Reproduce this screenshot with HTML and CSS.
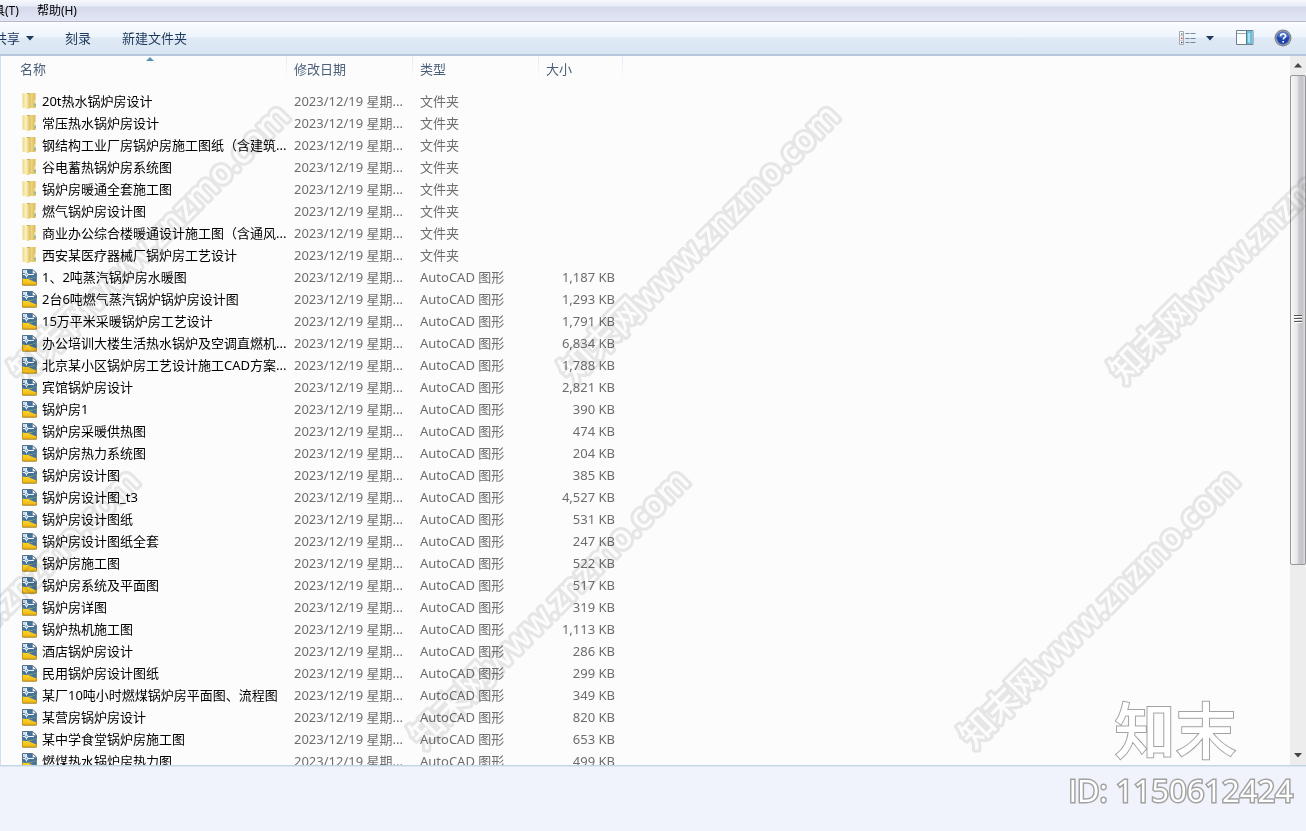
FILE: index.html
```html
<!DOCTYPE html>
<html lang="zh-CN">
<head>
<meta charset="utf-8">
<title>锅炉房设计</title>
<link rel="stylesheet" href="styles.css">
</head>
<body>
<svg class="defs" aria-hidden="true">
  <defs>
    <linearGradient id="gold" x1="0" x2="1" y1="0" y2="0"><stop offset="0" stop-color="#ecd481"/><stop offset=".45" stop-color="#fcf3c0"/><stop offset="1" stop-color="#dfbf5c"/></linearGradient>
    <linearGradient id="goldback" x1="0" x2="1" y1="0" y2="0"><stop offset="0" stop-color="#a98a3c"/><stop offset=".5" stop-color="#ecd683"/><stop offset="1" stop-color="#d9b954"/></linearGradient>
    <linearGradient id="yellow" x1="0" x2="0" y1="0" y2="1"><stop offset="0" stop-color="#ffe23c"/><stop offset="1" stop-color="#eeb511"/></linearGradient>
    <symbol id="folder" viewBox="0 0 16 18">
      <path d="M5 1h8.500v15H5z" fill="url(#goldback)"/>
      <path d="M.5 1.300h3.500L8 2.200v13L6.500 17.200.5 15.500z" fill="url(#gold)"/>
      <path d="M12.500 8h1.300v3.500h-1.300z" fill="#f8f4da"/><path d="M12.500 11.500h1.300v3h-1.300z" fill="#74b4ad"/>
    </symbol>
    <symbol id="dwg" viewBox="0 0 16 18">
      <path d="M.5 1.500h10L14.500 5v12H.5z" fill="#44739c" stroke="#54738d"/>
      <path d="M.5 10.800 6 11.200 14.500 15.800V17H.5z" fill="#f5c91d"/>
      <path d="M.5 10.800C6 11.300 11 10.300 14.500 8.500V17H.5z" fill="url(#yellow)"/>
      <path d="M6.500 11.300C10 10.800 12.500 9.600 14.500 8.500V14.500z" fill="#44739c"/>
      <path d="M.5 11v6h14v-3" fill="none" stroke="#ca920d"/>
      <path d="M1 2h3v3H1z" fill="#cfdeea"/>
      <path d="M4.500 2v7.500M1 6.500h11" stroke="#f2f7fb"/>
      <circle cx="4.500" cy="6.500" r="1.500" fill="#7ba3c2" stroke="#fff"/>
      <path d="M10.500 1.500V5.500H14.500z" fill="#f3f7fa" stroke="#6f879c" stroke-width=".8"/>
    </symbol>
  </defs>
</svg>

<div class="window">
  <nav class="menubar" aria-label="菜单">
    <button class="menu" type="button">具(T)</button>
    <button class="menu" type="button">帮助(H)</button>
  </nav>

  <header class="toolbar">
    <button class="tool tool-share" type="button">共享<svg class="caret" viewBox="0 0 8 5"><path d="M0 0h8L4 4.500z"/></svg></button>
    <button class="tool" type="button">刻录</button>
    <button class="tool" type="button">新建文件夹</button>
    <div class="tools-right">
      <button class="icon-btn view-btn" type="button" aria-label="更改您的视图">
        <svg width="17" height="15" viewBox="0 0 17 15"><path d="M.5.5h4v13h-4z" fill="#fff" stroke="#a3a8ae"/><path d="M.5 4.800h4M.5 9.200h4" stroke="#b7bbc0"/><path d="M2 2.200h1.500v1.500H2z" fill="#5c8a6b"/><path d="M2 6.500h1.500V8H2z" fill="#d04a38"/><path d="M2 10.800h1.500v1.500H2z" fill="#2e4f7d"/><path d="M6.500 2.500h4M6.500 7.500h4M6.500 11.500h4M11.500 2.500h5M11.500 7.500h5M11.500 11.500h5" stroke="#77869b" stroke-width="1.200"/></svg>
        <svg class="caret" viewBox="0 0 8 5"><path d="M0 0h8L4 4.500z"/></svg>
      </button>
      <button class="icon-btn" type="button" aria-label="显示预览窗格">
        <svg width="18" height="16" viewBox="0 0 18 16"><path d="M.5.500h16.500v14H.5z" fill="#fdfefe" stroke="#6e7f93"/><path d="M1 3.500h10" stroke="#9ba8b6"/><path d="M11 1h5.500v13H11z" fill="#6cc0da"/><path d="M12 3h2v9.500h-2z" fill="#a9e1ee"/><path d="M10.500 1v13.500" stroke="#567b91"/></svg>
      </button>
      <button class="icon-btn" type="button" aria-label="获取帮助">
        <svg width="18" height="18" viewBox="0 0 18 18"><circle cx="9" cy="9" r="7.800" fill="#d5d7dc" stroke="#85888f" stroke-width="1.400"/><circle cx="9" cy="9" r="6.300" fill="#1e43ad" stroke="#4b66a5"/><path d="M3.500 7.500a5.600 5.600 0 0 1 11 0q-5 3-11 0z" fill="#5f86dc" opacity=".65"/><path d="M6.600 7.200c0-3.300 5-3.100 5-.300 0 1.800-2.300 1.700-2.300 3.600M9.200 12v1.500" fill="none" stroke="#fff" stroke-width="1.700"/></svg>
      </button>
    </div>
  </header>

  <main class="content">
    <div class="list">
      <svg class="sort" viewBox="0 0 8 4"><path d="M4 0 8 4H0z"/></svg>
      <table class="files">
        <colgroup><col class="c-name"><col class="c-date"><col class="c-type"><col class="c-size"><col></colgroup>
        <thead><tr><th>名称</th><th>修改日期</th><th>类型</th><th>大小</th><th></th></tr></thead>
        <tbody>
          <tr><td><svg class="ico"><use href="#folder"/></svg>20t热水锅炉房设计</td><td>2023/12/19 星期...</td><td>文件夹</td><td></td></tr>
          <tr><td><svg class="ico"><use href="#folder"/></svg>常压热水锅炉房设计</td><td>2023/12/19 星期...</td><td>文件夹</td><td></td></tr>
          <tr><td><svg class="ico"><use href="#folder"/></svg>钢结构工业厂房锅炉房施工图纸（含建筑...</td><td>2023/12/19 星期...</td><td>文件夹</td><td></td></tr>
          <tr><td><svg class="ico"><use href="#folder"/></svg>谷电蓄热锅炉房系统图</td><td>2023/12/19 星期...</td><td>文件夹</td><td></td></tr>
          <tr><td><svg class="ico"><use href="#folder"/></svg>锅炉房暖通全套施工图</td><td>2023/12/19 星期...</td><td>文件夹</td><td></td></tr>
          <tr><td><svg class="ico"><use href="#folder"/></svg>燃气锅炉房设计图</td><td>2023/12/19 星期...</td><td>文件夹</td><td></td></tr>
          <tr><td><svg class="ico"><use href="#folder"/></svg>商业办公综合楼暖通设计施工图（含通风...</td><td>2023/12/19 星期...</td><td>文件夹</td><td></td></tr>
          <tr><td><svg class="ico"><use href="#folder"/></svg>西安某医疗器械厂锅炉房工艺设计</td><td>2023/12/19 星期...</td><td>文件夹</td><td></td></tr>
          <tr><td><svg class="ico"><use href="#dwg"/></svg>1、2吨蒸汽锅炉房水暖图</td><td>2023/12/19 星期...</td><td>AutoCAD 图形</td><td>1,187 KB</td></tr>
          <tr><td><svg class="ico"><use href="#dwg"/></svg>2台6吨燃气蒸汽锅炉锅炉房设计图</td><td>2023/12/19 星期...</td><td>AutoCAD 图形</td><td>1,293 KB</td></tr>
          <tr><td><svg class="ico"><use href="#dwg"/></svg>15万平米采暖锅炉房工艺设计</td><td>2023/12/19 星期...</td><td>AutoCAD 图形</td><td>1,791 KB</td></tr>
          <tr><td><svg class="ico"><use href="#dwg"/></svg>办公培训大楼生活热水锅炉及空调直燃机...</td><td>2023/12/19 星期...</td><td>AutoCAD 图形</td><td>6,834 KB</td></tr>
          <tr><td><svg class="ico"><use href="#dwg"/></svg>北京某小区锅炉房工艺设计施工CAD方案...</td><td>2023/12/19 星期...</td><td>AutoCAD 图形</td><td>1,788 KB</td></tr>
          <tr><td><svg class="ico"><use href="#dwg"/></svg>宾馆锅炉房设计</td><td>2023/12/19 星期...</td><td>AutoCAD 图形</td><td>2,821 KB</td></tr>
          <tr><td><svg class="ico"><use href="#dwg"/></svg>锅炉房1</td><td>2023/12/19 星期...</td><td>AutoCAD 图形</td><td>390 KB</td></tr>
          <tr><td><svg class="ico"><use href="#dwg"/></svg>锅炉房采暖供热图</td><td>2023/12/19 星期...</td><td>AutoCAD 图形</td><td>474 KB</td></tr>
          <tr><td><svg class="ico"><use href="#dwg"/></svg>锅炉房热力系统图</td><td>2023/12/19 星期...</td><td>AutoCAD 图形</td><td>204 KB</td></tr>
          <tr><td><svg class="ico"><use href="#dwg"/></svg>锅炉房设计图</td><td>2023/12/19 星期...</td><td>AutoCAD 图形</td><td>385 KB</td></tr>
          <tr><td><svg class="ico"><use href="#dwg"/></svg>锅炉房设计图_t3</td><td>2023/12/19 星期...</td><td>AutoCAD 图形</td><td>4,527 KB</td></tr>
          <tr><td><svg class="ico"><use href="#dwg"/></svg>锅炉房设计图纸</td><td>2023/12/19 星期...</td><td>AutoCAD 图形</td><td>531 KB</td></tr>
          <tr><td><svg class="ico"><use href="#dwg"/></svg>锅炉房设计图纸全套</td><td>2023/12/19 星期...</td><td>AutoCAD 图形</td><td>247 KB</td></tr>
          <tr><td><svg class="ico"><use href="#dwg"/></svg>锅炉房施工图</td><td>2023/12/19 星期...</td><td>AutoCAD 图形</td><td>522 KB</td></tr>
          <tr><td><svg class="ico"><use href="#dwg"/></svg>锅炉房系统及平面图</td><td>2023/12/19 星期...</td><td>AutoCAD 图形</td><td>517 KB</td></tr>
          <tr><td><svg class="ico"><use href="#dwg"/></svg>锅炉房详图</td><td>2023/12/19 星期...</td><td>AutoCAD 图形</td><td>319 KB</td></tr>
          <tr><td><svg class="ico"><use href="#dwg"/></svg>锅炉热机施工图</td><td>2023/12/19 星期...</td><td>AutoCAD 图形</td><td>1,113 KB</td></tr>
          <tr><td><svg class="ico"><use href="#dwg"/></svg>酒店锅炉房设计</td><td>2023/12/19 星期...</td><td>AutoCAD 图形</td><td>286 KB</td></tr>
          <tr><td><svg class="ico"><use href="#dwg"/></svg>民用锅炉房设计图纸</td><td>2023/12/19 星期...</td><td>AutoCAD 图形</td><td>299 KB</td></tr>
          <tr><td><svg class="ico"><use href="#dwg"/></svg>某厂10吨小时燃煤锅炉房平面图、流程图</td><td>2023/12/19 星期...</td><td>AutoCAD 图形</td><td>349 KB</td></tr>
          <tr><td><svg class="ico"><use href="#dwg"/></svg>某营房锅炉房设计</td><td>2023/12/19 星期...</td><td>AutoCAD 图形</td><td>820 KB</td></tr>
          <tr><td><svg class="ico"><use href="#dwg"/></svg>某中学食堂锅炉房施工图</td><td>2023/12/19 星期...</td><td>AutoCAD 图形</td><td>653 KB</td></tr>
          <tr><td><svg class="ico"><use href="#dwg"/></svg>燃煤热水锅炉房热力图</td><td>2023/12/19 星期...</td><td>AutoCAD 图形</td><td>499 KB</td></tr>
        </tbody>
      </table>
    </div>
    <div class="scrollbar">
      <button class="arrow" type="button" aria-label="向上滚动"><svg width="8" height="5" viewBox="0 0 8 5"><path d="M4 0 8 4.500H0z" fill="#444"/></svg></button>
      <div class="track"><div class="thumb"><svg width="8" height="9" viewBox="0 0 8 9"><path d="M0 .5h8M0 3.500h8M0 6.500h8" stroke="#555"/><path d="M0 1.500h8M0 4.500h8M0 7.500h8" stroke="#fff"/></svg></div></div>
      <button class="arrow" type="button" aria-label="向下滚动"><svg width="8" height="5" viewBox="0 0 8 5"><path d="M0 0h8L4 4.500z" fill="#444"/></svg></button>
    </div>
  </main>

  <footer class="details"></footer>

  <svg class="watermark" aria-hidden="true">
    <text transform="translate(24 385) rotate(-45)">知末网www.znzmo.com</text>
    <text transform="translate(574 385) rotate(-45)">知末网www.znzmo.com</text>
    <text transform="translate(1124 385) rotate(-45)">知末网www.znzmo.com</text>
    <text transform="translate(-126 750) rotate(-45)">知末网www.znzmo.com</text>
    <text transform="translate(424 750) rotate(-45)">知末网www.znzmo.com</text>
    <text transform="translate(974 750) rotate(-45)">知末网www.znzmo.com</text>
  </svg>
  <div class="stamp">
    <div class="stamp-logo">知末</div>
    <div class="stamp-id">ID: 1150612424</div>
  </div>
</div>
</body>
</html>
```
FILE: styles.css
```css
* { box-sizing: border-box; }

body {
  margin: 0;
  font: 13px/22px "Noto Sans", "Noto Sans CJK SC", sans-serif;
  color: #000;
}

button {
  padding: 0;
  border: 0;
  background: none;
  font: inherit;
  color: inherit;
  white-space: nowrap;
}

.defs { position: absolute; width: 0; height: 0; }

.window {
  position: relative;
  display: flex;
  flex-direction: column;
  height: 100vh;
  overflow: hidden;
  background: #f0f3fb;
}

.menubar {
  display: flex;
  gap: 18px;
  height: 22px;
  margin-left: -7px;
  font-size: 12px;
  line-height: 21px;
  background: linear-gradient(#f6f8fc 0, #e8ecf6 6px, #d5daec 7px, #e2e6f4 21px);
  border-bottom: 1px solid #b4bac8;
}
.menu { height: 21px; }

.toolbar {
  display: flex;
  align-items: center;
  gap: 31px;
  height: 34px;
  padding-right: 14px;
  color: #1e395b;
  background: linear-gradient(#fafcff 0, #edf4fc 15px, #dfe9f5 16px, #dae6f4 32px);
  border-bottom: 2px solid #b7c6dc;
}
.tool-share { display: flex; align-items: center; gap: 6px; margin-left: -6px; }
.caret { width: 8px; height: 5px; fill: #1e395b; }

.tools-right { display: flex; align-items: center; gap: 20px; margin-left: auto; }
.icon-btn { display: flex; align-items: center; }
.view-btn { gap: 10px; margin-right: 2px; }

.content {
  display: flex;
  flex: 1;
  min-height: 0;
  border-left: 1px solid #cfe0f2;
  border-bottom: 1px solid #c3d5e4;
  background: #fcfcfc;
}
.list { position: relative; flex: 1; overflow: hidden; }
.sort { position: absolute; left: 145px; top: 1px; width: 8px; height: 4px; fill: #5a94b3; }

.files { width: 100%; table-layout: fixed; border-collapse: collapse; }
.c-name { width: 286px; }
.c-date, .c-type { width: 126px; }
.c-size { width: 84px; }

.files th {
  height: 34px;
  padding: 2px 0 0 7px;
  font-weight: 400;
  text-align: left;
  vertical-align: top;
  color: #4c607a;
  background: linear-gradient(#e2eaf5, #fcfcfc) right top / 1px 24px no-repeat;
}
.files th:first-child { padding-left: 19px; }
.files th:last-child { background: none; }
.files td {
  height: 22px;
  padding: 0 0 0 7px;
  white-space: nowrap;
  color: #6d6d6d;
}
.files td:first-child { padding-left: 21px; color: #000; }
.files td:nth-child(4) { padding: 0 8px 0 0; text-align: right; }
.ico { width: 16px; height: 18px; margin: -2px 4px 2px 0; vertical-align: middle; }

.scrollbar { display: flex; flex-direction: column; width: 16px; background: #ededee; }
.arrow { display: flex; align-items: center; justify-content: center; height: 19px; }
.track { flex: 1; }
.thumb {
  display: flex;
  align-items: center;
  justify-content: center;
  height: 73%;
  border: 1px solid #97979b;
  border-radius: 2px;
  background: linear-gradient(90deg, #f7f7f7 0, #e6e6e8 45%, #cbcbd0 55%, #c2c2c8 80%, #dedee1);
}

.details { height: 65px; background: #f0f3fb; border-top: 1px solid #dbe6f2; }

.watermark {
  position: absolute;
  left: 0;
  top: 0;
  width: 100%;
  height: 100%;
  pointer-events: none;
  mix-blend-mode: multiply;
}
.watermark text {
  font: 500 34px "Noto Sans", "Noto Sans CJK SC", sans-serif;
  fill: #fff;
  stroke: #e9e9e9;
  stroke-width: 6px;
  stroke-linejoin: round;
  paint-order: stroke;
}

.stamp {
  position: absolute;
  right: 13px;
  bottom: 20px;
  display: flex;
  flex-direction: column;
  color: #fff;
  paint-order: stroke;
  -webkit-text-stroke: 2px #a2a2a2;
  pointer-events: none;
}
.stamp-logo { padding-left: 46px; font-size: 61px; font-weight: 500; line-height: 76px; }
.stamp-id { font: 500 31px/42px "Open Sans", "Noto Sans", sans-serif; -webkit-text-stroke-width: 3px; }
```
